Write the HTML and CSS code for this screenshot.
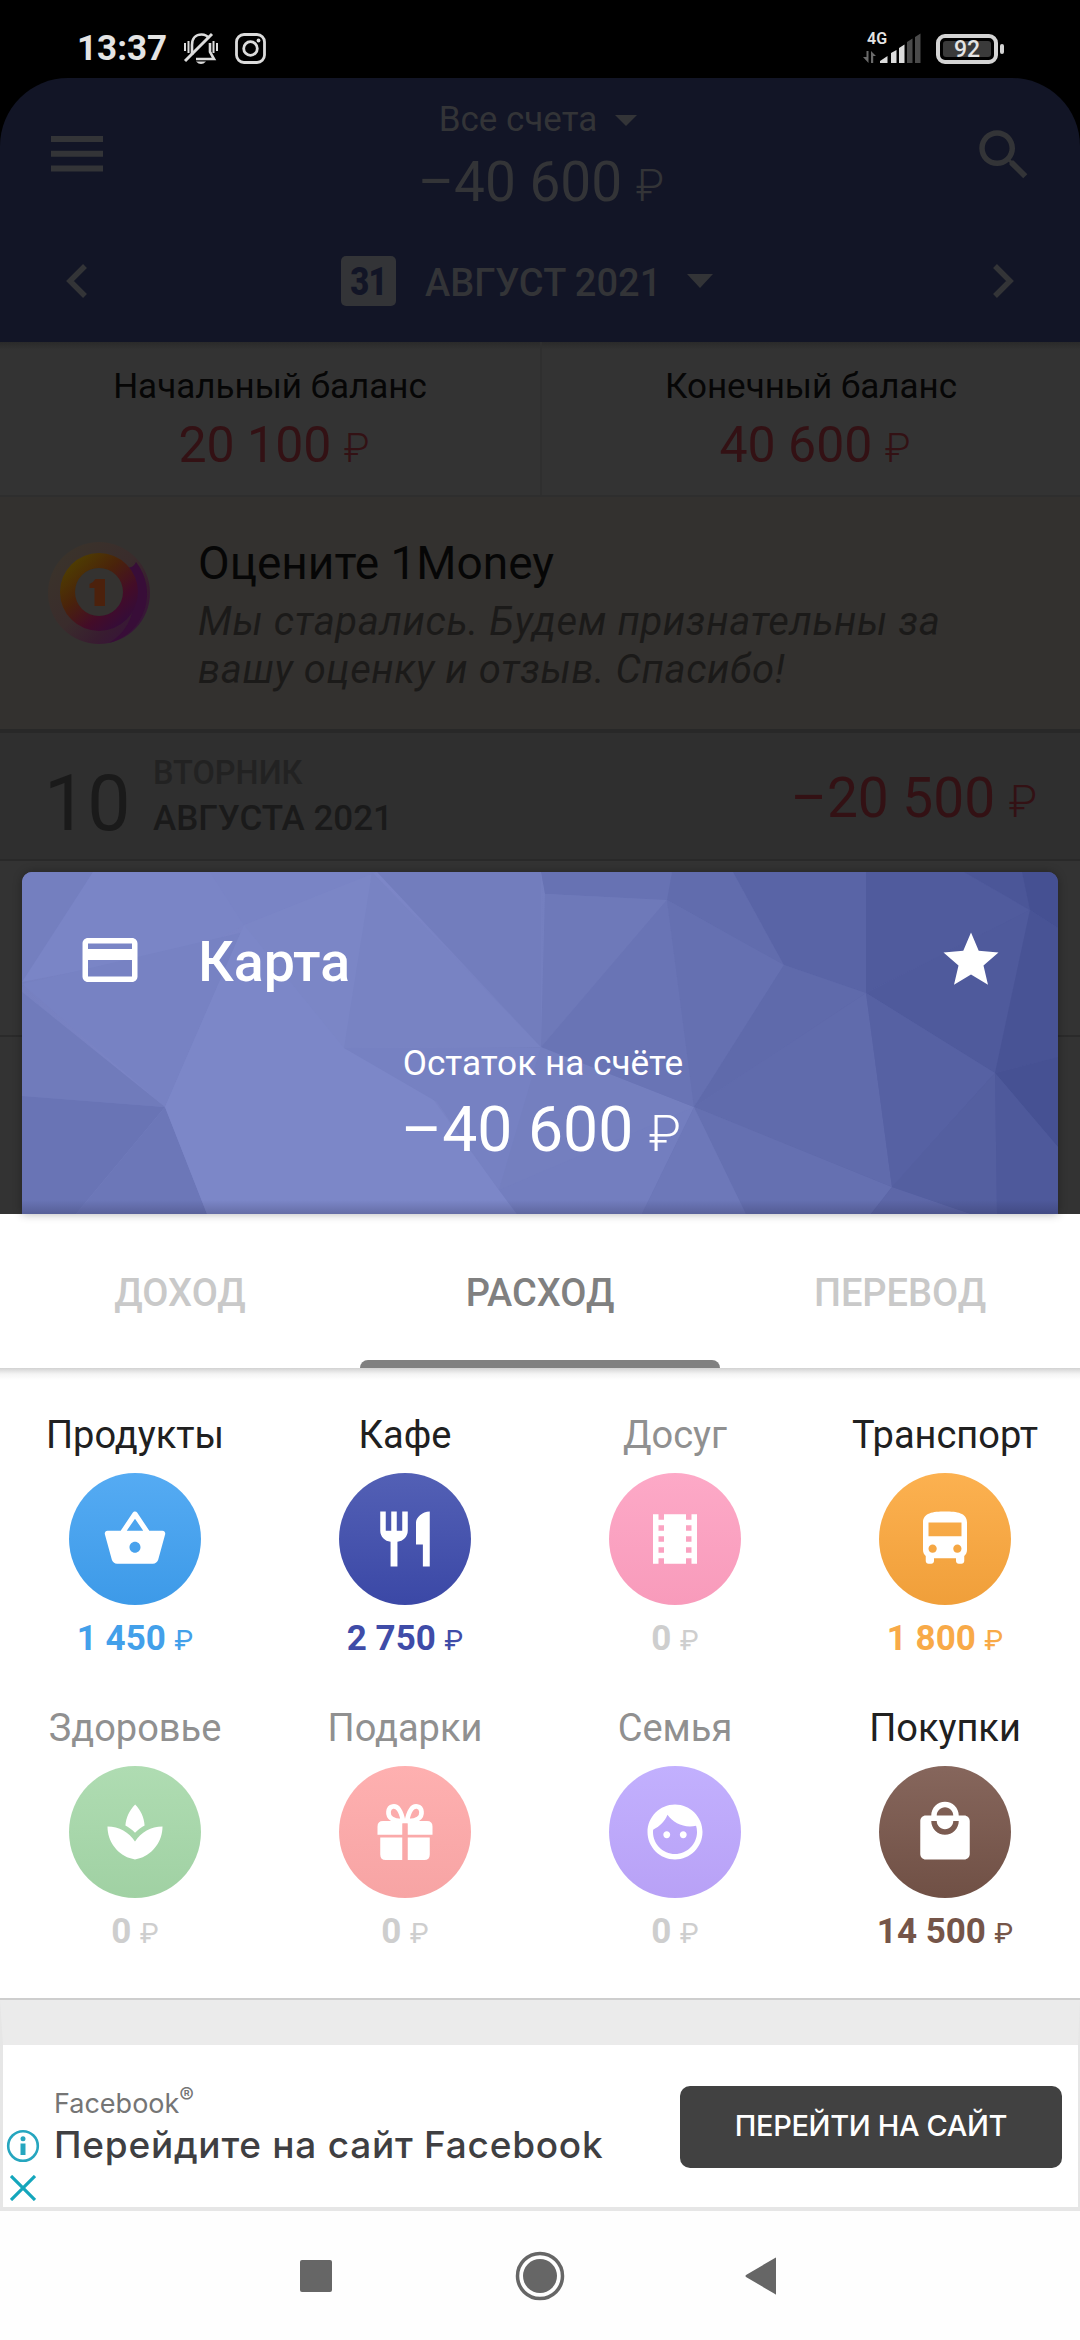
FILE: index.html
```html
<!DOCTYPE html>
<html lang="ru">
<head>
<meta charset="utf-8">
<title>1Money</title>
<link rel="stylesheet" href="styles.css">
</head>
<body>
<div class="screen">
  <header class="status">
    <span class="clock">13:37</span>
    <svg class="st-bell" width="36" height="34" viewBox="0 0 36 34" fill="none" stroke="#dcdcdc" stroke-width="2.6">
      <path d="M9 23V13C9 6 13 2.5 18.500 2.500C22 2.500 24.500 4 26 6.500M27 11V20L31 27H13"/>
      <path d="M2 29L29 2" stroke-width="3"/><path d="M2 11V19M5.500 9V21M30.500 9V21M34 11V19" stroke-width="2"/>
      <path d="M13 29.500H23Q18 34.500 13 29.500Z" fill="#dcdcdc" stroke="none"/>
    </svg>
    <svg class="st-insta" width="31" height="31" viewBox="0 0 31 31" fill="none" stroke="#dcdcdc" stroke-width="2.8">
      <rect x="1.500" y="1.500" width="28" height="28" rx="7.500"/><circle cx="15.500" cy="15.500" r="6.800"/><circle cx="23.500" cy="7.500" r="1.900" fill="#dcdcdc" stroke="none"/>
    </svg>
    <div class="net">
      <span class="gen">4G</span>
      <svg width="58" height="32" viewBox="0 0 58 32">
        <g fill="#6a6a6a"><path d="M3.500 20H5.500V32L0 26H3.500ZM8 20L13 25H10.200V32H8Z"/></g>
        <g fill="#dcdcdc"><path d="M17 32V30L24.500 25V32ZM28 32V22L33.500 19V32ZM36 32V17L41.500 13.500V32Z"/></g>
        <g fill="#4a4a4a"><path d="M44 32V11L49.500 7.500V32ZM52 32V6L57.500 2.500V32Z"/></g>
      </svg>
    </div>
    <div class="battery"><span class="level">92</span></div><i class="nub"></i>
  </header>

  <section class="top">
    <div class="bar">
      <svg class="menu" width="52" height="36" viewBox="0 0 52 36"><path fill="currentColor" d="M0 0h52v6H0zM0 14.700h52v6H0zM0 29.400h52v6H0z"/></svg>
      <div class="total">
        <div class="accounts">Все счета<svg width="22" height="11" viewBox="0 0 22 11"><path fill="currentColor" d="M0 0h22L11 11z"/></svg></div>
        <div class="sum">–40 600 <span class="rub">₽</span></div>
      </div>
      <svg class="search" width="66" height="66" viewBox="0 0 24 24"><path fill="currentColor" d="M15.500 14h-.79l-.28-.27C15.410 12.590 16 11.110 16 9.500 16 5.910 13.090 3 9.500 3S3 5.910 3 9.500 5.910 16 9.500 16c1.610 0 3.090-.59 4.230-1.570l.27.28v.79l5 4.990L20.490 19l-4.990-5zm-6 0C7.010 14 5 11.990 5 9.500S7.010 5 9.500 5 14 7.010 14 9.500 11.990 14 9.500 14z"/></svg>
    </div>
    <div class="period">
      <svg class="prev" width="21" height="34" viewBox="0 0 21 34"><path fill="none" stroke="currentColor" stroke-width="5.500" d="M19 2L4 17L19 32"/></svg>
      <span class="cal"><span class="cal-day">31</span></span>
      <span class="month">АВГУСТ 2021</span>
      <svg class="drop" width="26" height="14" viewBox="0 0 26 14"><path fill="currentColor" d="M0 0h26L13 14z"/></svg>
      <svg class="next" width="21" height="34" viewBox="0 0 21 34"><path fill="none" stroke="currentColor" stroke-width="5.500" d="M2 2L17 17L2 32"/></svg>
    </div>
  </section>

  <section class="balances">
    <div class="bal"><span class="bal-name">Начальный баланс</span><span class="bal-sum">20 100 <span class="rub">₽</span></span></div>
    <div class="bal"><span class="bal-name">Конечный баланс</span><span class="bal-sum">40 600 <span class="rub">₽</span></span></div>
  </section>

  <section class="rate">
    <svg class="logo" width="104" height="104" viewBox="0 0 104 104">
      <defs>
        <linearGradient id="ring" x1="0.1" y1="0.1" x2="0.8" y2="0.9"><stop offset="0" stop-color="#4f4000"/><stop offset=".4" stop-color="#4a230a"/><stop offset=".75" stop-color="#430c28"/><stop offset="1" stop-color="#350c38"/></linearGradient>
        <linearGradient id="halo" x1="0" y1="0" x2="0.9" y2="0.9"><stop offset="0" stop-color="#3a352a"/><stop offset=".55" stop-color="#3a2c2c"/><stop offset=".8" stop-color="#381c30"/><stop offset="1" stop-color="#38123c"/></linearGradient>
      </defs>
      <circle cx="52" cy="52" r="51" fill="url(#halo)"/>
      <path d="M89 21A51 51 0 0 1 62 102C86 88 94 60 80 26Q86 28 89 21Z" fill="#380d38"/>
      <circle cx="52" cy="51" r="39" fill="url(#ring)"/>
      <circle cx="52" cy="51" r="24" fill="#343230"/>
      <path d="M48.500 38H58V65H47.500V47H42.500V43Q46 42 48.500 38Z" fill="#4c210c"/>
    </svg>
    <div class="rate-text">
      <div class="rate-title">Оцените 1Money</div>
      <div class="rate-desc">Мы старались. Будем признательны за<br>вашу оценку и отзыв. Спасибо!</div>
    </div>
  </section>

  <section class="day">
    <span class="day-num">10</span>
    <div class="day-text"><span class="weekday">ВТОРНИК</span><span class="day-month">АВГУСТА 2021</span></div>
    <span class="day-sum">–20 500 <span class="rub">₽</span></span>
  </section>

  <section class="backdrop">
    <div class="card">
      <svg class="facets" width="1036" height="342" viewBox="0 0 1036 342" preserveAspectRatio="none">
        <defs><linearGradient id="base" x1="0" x2="1"><stop offset="0" stop-color="#7680c0"/><stop offset=".1" stop-color="#7a84c5"/><stop offset=".35" stop-color="#7c86c7"/><stop offset=".5" stop-color="#747fbf"/><stop offset=".68" stop-color="#656fb0"/><stop offset=".85" stop-color="#5761a4"/><stop offset="1" stop-color="#4d5799"/></linearGradient>
        <linearGradient id="foot" x1="0" x2="0" y1="0" y2="1"><stop offset="0" stop-color="#202040" stop-opacity="0"/><stop offset="1" stop-color="#202040" stop-opacity=".25"/></linearGradient></defs>
        <rect width="1036" height="342" fill="url(#base)"/>
        <path d="M0 0H71L4 110L0 116Z" fill="#747fbf"/>
        <path d="M71 0H188L222 53L180 75L0 110Z" fill="#7a85c6"/>
        <path d="M0 112L222 60L143 235Z" fill="#7782c3"/>
        <path d="M188 0H355L222 53Z" fill="#7984c5"/>
        <path d="M0 120L143 235L0 224Z" fill="#707bbb"/>
        <path d="M0 224L143 235L54 342H0Z" fill="#6974b5"/>
        <path d="M143 235L185 342H54Z" fill="#6c77b8"/>
        <path d="M222 53L355 0L345 60L330 176L143 235Z" fill="#7b86c6"/>
        <path d="M350 0L519 175L322 176Z" fill="#7883c3"/>
        <path d="M355 0H519V175Z" fill="#727dbd"/>
        <path d="M143 235L222 53L322 176L400 212L477 318L495 342H185Z" fill="#7c87c8"/>
        <path d="M322 176H519L477 318L415 230Z" fill="#7681c2"/>
        <path d="M519 175L672 235L640 300L477 318Z" fill="#747fbf"/>
        <path d="M477 318L672 235L620 342H495Z" fill="#737ebf"/>
        <path d="M519 0H650L645 28L523 22Z" fill="#6772b3"/>
        <path d="M523 22L645 28L519 175Z" fill="#6e79b9"/>
        <path d="M645 28L672 235L519 175Z" fill="#6974b5"/>
        <path d="M650 0H711L762 93L645 28Z" fill="#616cad"/>
        <path d="M645 28L762 93L672 235Z" fill="#6570b1"/>
        <path d="M711 0H844V121L762 93Z" fill="#5964a6"/>
        <path d="M762 93L844 121L672 235Z" fill="#5f6aab"/>
        <path d="M844 121L870 315L672 235Z" fill="#606bac"/>
        <path d="M672 235L870 315L849 342H724Z" fill="#6570b1"/>
        <path d="M672 235L724 342H620Z" fill="#6d78b9"/>
        <path d="M870 315L949 342H849Z" fill="#5d67a8"/>
        <path d="M844 0H942L1008 38L844 121Z" fill="#505b9d"/>
        <path d="M844 121L1008 38L973 201Z" fill="#4f5a9c"/>
        <path d="M844 121L973 201L870 315Z" fill="#5661a3"/>
        <path d="M870 315L973 201L975 342H949Z" fill="#545fa0"/>
        <path d="M942 0H1000L1008 38Z" fill="#4b5698"/>
        <path d="M1000 0H1036V56L1008 38Z" fill="#455092"/>
        <path d="M1008 38L1036 56V185L973 201Z" fill="#485395"/>
        <path d="M973 201L1036 185V275Z" fill="#465193"/>
        <path d="M973 201L1036 275V342H975Z" fill="#4e599b"/>
        <rect y="328" width="1036" height="14" fill="url(#foot)"/>
      </svg>
      <div class="card-head">
        <svg width="66" height="66" viewBox="0 0 24 24"><path fill="currentColor" d="M20 4H4c-1.110 0-1.990.89-1.990 2L2 18c0 1.110.89 2 2 2h16c1.110 0 2-.89 2-2V6c0-1.110-.89-2-2-2zm0 14H4v-6h16v6zm0-10H4V6h16v2z"/></svg>
        <span class="card-name">Карта</span>
        <svg width="66" height="66" viewBox="0 0 24 24"><path fill="currentColor" d="M12 17.270L18.180 21l-1.640-7.030L22 9.240l-7.190-.61L12 2 9.190 8.630 2 9.240l5.460 4.730L5.820 21z"/></svg>
      </div>
      <div class="card-note">Остаток на счёте</div>
      <div class="card-sum">–40 600 <span class="rub">₽</span></div>
    </div>
  </section>

  <nav class="tabs"><span class="tab">ДОХОД</span><span class="tab active">РАСХОД</span><span class="tab">ПЕРЕВОД</span></nav>

  <main class="cats">
    <div class="cat groceries"><span class="name">Продукты</span><span class="disc"><svg viewBox="0 0 24 24"><path d="M17.210 9l-4.380-6.560c-.19-.28-.51-.42-.83-.42-.32 0-.64.14-.83.43L6.790 9H2c-.55 0-1 .45-1 1 0 .09.01.18.04.27l2.540 9.270c.23.84 1 1.460 1.920 1.460h13c.92 0 1.690-.62 1.930-1.460l2.540-9.270L23 10c0-.55-.45-1-1-1h-4.790zM9 9l3-4.400L15 9H9zm3 8c-1.100 0-2-.9-2-2s.9-2 2-2 2 .9 2 2-.9 2-2 2z"/></svg></span><span class="amount">1 450 <span class="rub">₽</span></span></div>
    <div class="cat cafe"><span class="name">Кафе</span><span class="disc"><svg viewBox="0 0 24 24"><path d="M11 9H9V2H7v7H5V2H3v7c0 2.120 1.660 3.840 3.750 3.970V22h2.500v-9.030C11.340 12.840 13 11.120 13 9V2h-2v7zm5-3v8h2.500v8H21V2c-2.760 0-5 2.240-5 4z"/></svg></span><span class="amount">2 750 <span class="rub">₽</span></span></div>
    <div class="cat leisure empty"><span class="name">Досуг</span><span class="disc"><svg viewBox="0 0 24 24"><path d="M18 3v2h-2V3H8v2H6V3H4v18h2v-2h2v2h8v-2h2v2h2V3h-2zM8 17H6v-2h2v2zm0-4H6v-2h2v2zm0-4H6V7h2v2zm10 8h-2v-2h2v2zm0-4h-2v-2h2v2zm0-4h-2V7h2v2z"/></svg></span><span class="amount">0 <span class="rub">₽</span></span></div>
    <div class="cat transport"><span class="name">Транспорт</span><span class="disc"><svg viewBox="0 0 24 24"><path d="M4 16c0 .88.39 1.670 1 2.220V20c0 .55.45 1 1 1h1c.55 0 1-.45 1-1v-1h8v1c0 .55.45 1 1 1h1c.55 0 1-.45 1-1v-1.780c.61-.55 1-1.340 1-2.220V6c0-3.500-3.580-4-8-4s-8 .5-8 4v10zm3.500 1c-.83 0-1.500-.67-1.500-1.500S6.670 14 7.500 14s1.500.67 1.500 1.500S8.330 17 7.500 17zm9 0c-.83 0-1.500-.67-1.500-1.500s.67-1.500 1.500-1.500 1.500.67 1.500 1.500-.67 1.500-1.500 1.500zm1.500-6H6V6h12v5z"/></svg></span><span class="amount">1 800 <span class="rub">₽</span></span></div>
    <div class="cat health empty"><span class="name">Здоровье</span><span class="disc"><svg viewBox="0 0 24 24"><path d="M15.490 9.630c-.18-2.790-1.310-5.510-3.430-7.630-2.140 2.140-3.320 4.860-3.550 7.630 1.280.68 2.460 1.560 3.490 2.630 1.030-1.060 2.210-1.940 3.490-2.630zM12 15.450C9.850 12.170 6.180 10 2 10c0 5.320 3.360 9.820 8.030 11.490.63.23 1.290.4 1.970.51.68-.12 1.330-.29 1.970-.51C18.640 19.820 22 15.320 22 10c-4.180 0-7.850 2.170-10 5.450z"/></svg></span><span class="amount">0 <span class="rub">₽</span></span></div>
    <div class="cat gifts empty"><span class="name">Подарки</span><span class="disc"><svg viewBox="0 0 24 24"><path d="M4 8H11V13H2V10Q2 8 4 8ZM13 8H20Q22 8 22 10V13H13ZM3 14H11V22.200H5Q3 22.200 3 20.200ZM13 14H21V20.200Q21 22.200 19 22.200H13Z"/><path class="bow" d="M11.300 8C7.500 8.200 5.800 6.600 6 4.600C6.200 2.400 8.600 2 9.800 3.800C10.800 5.300 11.300 8 11.300 8ZM12.700 8C16.500 8.200 18.200 6.600 18 4.600C17.800 2.400 15.400 2 14.200 3.800C13.200 5.300 12.700 8 12.700 8Z"/></svg></span><span class="amount">0 <span class="rub">₽</span></span></div>
    <div class="cat family empty"><span class="name">Семья</span><span class="disc"><svg viewBox="0 0 24 24"><path d="M9 11.750c-.69 0-1.250.56-1.250 1.250s.56 1.250 1.250 1.250 1.250-.56 1.250-1.250-.56-1.250-1.250-1.250zm6 0c-.69 0-1.250.56-1.250 1.250s.56 1.250 1.250 1.250 1.250-.56 1.250-1.250-.56-1.250-1.250-1.250zM12 2C6.480 2 2 6.480 2 12s4.480 10 10 10 10-4.480 10-10S17.520 2 12 2zm0 18c-4.410 0-8-3.590-8-8 0-.29.02-.58.05-.86 2.360-1.050 4.230-2.980 5.210-5.370C11.070 8.330 14.050 10 17.420 10c.78 0 1.530-.09 2.250-.26.21.71.33 1.470.33 2.260 0 4.410-3.590 8-8 8z"/></svg></span><span class="amount">0 <span class="rub">₽</span></span></div>
    <div class="cat shopping"><span class="name">Покупки</span><span class="disc"><svg viewBox="0 0 24 24"><path d="M19 6h-2c0-2.760-2.240-5-5-5S7 3.240 7 6H5c-1.100 0-1.990.9-1.990 2L3 20c0 1.100.9 2 2 2h14c1.100 0 2-.9 2-2V8c0-1.100-.9-2-2-2zm-7-3c1.660 0 3 1.340 3 3H9c0-1.660 1.340-3 3-3zm0 10c-2.760 0-5-2.240-5-5h2c0 1.660 1.340 3 3 3s3-1.340 3-3h2c0 2.760-2.240 5-5 5z"/></svg></span><span class="amount">14 500 <span class="rub">₽</span></span></div>
  </main>

  <aside class="ad">
    <div class="ad-marks">
      <svg width="34" height="34" viewBox="0 0 34 34"><circle cx="17" cy="17" r="14.800" fill="none" stroke="#26a6bf" stroke-width="2.600"/><circle cx="17" cy="9.800" r="2.500" fill="#26a6bf"/><path d="M14.500 14.500H19.500V26H14.500Z" fill="#26a6bf"/></svg>
      <svg width="26" height="26" viewBox="0 0 26 26"><path d="M1 1L25 25M25 1L1 25" stroke="#14a6bc" stroke-width="3.200"/></svg>
    </div>
    <div class="ad-text"><span class="ad-brand">Facebook<sup>®</sup></span><span class="ad-title">Перейдите на сайт Facebook</span></div>
    <span class="ad-button">ПЕРЕЙТИ НА САЙТ</span>
  </aside>

  <footer class="keys">
    <i class="recent"></i>
    <svg width="50" height="50" viewBox="0 0 50 50"><circle cx="25" cy="25" r="22.500" fill="none" stroke="#666" stroke-width="3.500"/><circle cx="25" cy="25" r="17" fill="#666"/></svg>
    <svg width="31" height="38" viewBox="0 0 31 38"><path fill="#666" d="M31 1V37Q31 38 30 37L1 20Q0 19 1 18L30 1Q31 0 31 1Z"/></svg>
  </footer>
</div>
</body>
</html>
```
FILE: styles.css
```css
* { box-sizing: border-box; }
body { margin: 0; background: #000; font-family: Roboto, sans-serif; }
svg { display: block; flex: none; }
.screen { width: 1080px; height: 2340px; display: flex; flex-direction: column; overflow: hidden; white-space: nowrap; }
.screen > * { flex: none; }
.rub { font-size: .8em; font-weight: 300; }

.status { height: 78px; display: flex; align-items: flex-start; color: #e4e4e4; }
.clock { margin: 29px 0 0 77px; width: 106px; font-size: 35px; line-height: 40px; font-weight: 700; }
.st-bell { margin-top: 32px; }
.st-insta { margin: 33px 0 0 16px; }
.net { margin: 31px 0 0 597px; width: 58px; height: 32px; display: grid; }
.net > * { grid-area: 1 / 1; }
.gen { padding-left: 4px; font-size: 16px; line-height: 15px; font-weight: 600; }
.battery { margin: 34px 0 0 15px; width: 62px; height: 30px; border: 4px solid #d4d4d4; border-radius: 9px; padding: 3px; display: flex; }
.level { flex: 1; background: #3a3a3a; border-radius: 3px; font-size: 23px; line-height: 18px; font-weight: 500; text-align: center; }
.nub { margin: 44px 0 0 2px; width: 4px; height: 10px; border-radius: 2px; background: #d4d4d4; }

.top { height: 264px; padding-top: 22px; background: #121526; color: #333437; border-radius: 68px 68px 0 0; }
.bar { height: 114px; display: flex; justify-content: space-between; }
.menu { margin: 36px 0 0 51px; width: 52px; }
.search { margin: 22px 43px 0 0; }
.total { margin-left: 8px; text-align: center; }
.accounts { display: flex; justify-content: center; align-items: center; gap: 18px; margin-right: 6px; font-size: 35px; line-height: 40px; }
.sum { margin-top: 10px; font-size: 55px; line-height: 64px; }
.period { height: 134px; display: flex; align-items: center; padding: 0 66px; }
.cal { margin-left: 254px; width: 55px; height: 50px; border-radius: 5px; background: #333437; color: #121526; font-size: 39px; font-weight: 900; line-height: 52px; text-align: center; letter-spacing: -1px; }
.cal-day { display: block; transform: scaleX(.84); }
.month { margin-left: 29px; width: 262px; padding-top: 3px; font-size: 38px; font-weight: 500; }
.next { margin-left: auto; }

.balances { height: 155px; display: grid; grid-template-columns: 1fr 1fr; background: linear-gradient(#2a2a2a, #333 8px); border-bottom: 2px solid #2e2e2e; }
.bal { display: flex; flex-direction: column; align-items: center; padding-top: 25px; color: #060606; }
.bal + .bal { border-left: 2px solid #2f2f2f; }
.bal-name { font-size: 35px; line-height: 40px; }
.bal-sum { margin: 8px 0 0 8px; font-size: 50px; line-height: 60px; color: #331114; }

.rate { height: 236px; display: flex; padding: 39px 0 0 47px; background: #33312f; border-bottom: 4px solid #282828; }
.logo { margin-top: 5px; }
.rate-text { margin-left: 47px; }
.rate-title { font-size: 46px; line-height: 54px; color: #060606; }
.rate-desc { margin-top: 8px; font-size: 40px; line-height: 48px; letter-spacing: .6px; font-style: italic; color: #1b1a19; }

.day { height: 128px; display: flex; padding: 0 43px 0 44px; background: #2f2f2f; color: #1a1a1a; border-bottom: 2px solid #292929; }
.day-num { margin-top: 32px; width: 109px; font-size: 77px; line-height: 78px; }
.day-text { display: flex; flex-direction: column; gap: 6px; padding-top: 20px; line-height: 40px; }
.weekday { font-size: 32.5px; font-weight: 500; color: #222; }
.day-month { font-size: 35px; font-weight: 500; }
.day-sum { margin: 33px 0 0 auto; font-size: 55px; line-height: 64px; color: #331114; }

.backdrop { height: 353px; padding: 11px 22px 0; background: linear-gradient(#333 174px, #2a2a2a 174px, #2a2a2a 176px, #333 176px); }
.card { position: relative; height: 342px; padding-top: 55px; border-radius: 10px 10px 0 0; overflow: hidden; color: #fff; text-align: center; box-shadow: 0 0 10px rgba(0,0,0,.3); }
.facets { position: absolute; inset: 0; }
.card-head, .card-note, .card-sum { position: relative; }
.card-head { display: flex; align-items: center; height: 66px; padding: 0 54px 0 55px; }
.card-name { margin: 0 auto 0 55px; font-size: 55.5px; line-height: 58px; font-weight: 500; padding-top: 6px; }
.card-note { margin: 49px 0 0 6px; font-size: 35.2px; line-height: 42px; }
.card-sum { margin: 10px 0 0 2px; font-size: 62.5px; line-height: 72px; }

.tabs { height: 154px; display: grid; grid-template-columns: repeat(3, 1fr); background: #fff; text-align: center; }
.tab { padding-top: 5px; font-size: 38px; line-height: 149px; font-weight: 500; color: #c9c9c9; }
.tab.active { color: #808080; }
.tab.active::after { content: ""; display: block; height: 8px; margin-top: -8px; border-radius: 8px 8px 0 0; background: #808080; }

.cats { height: 632px; padding-top: 44px; display: grid; grid-template-columns: repeat(4, 270px); grid-auto-rows: 293px; background: linear-gradient(#d2d2d2, #f4f4f4 6px, #fff 12px); border-bottom: 2px solid #cecece; }
.cat { display: flex; flex-direction: column; align-items: center; color: var(--ink); }
.name { font-size: 38px; line-height: 46px; color: #202020; }
.empty .name { color: #909090; }
.disc { width: 132px; height: 132px; margin: 15px 0 14px; border-radius: 50%; display: grid; place-items: center; background: linear-gradient(var(--hi), var(--lo)); }
.disc svg { width: 66px; height: 66px; fill: #fff; }
.bow { fill: none; stroke: #fff; stroke-width: 1.7; }
.amount { font-size: 35px; line-height: 40px; font-weight: 700; }
.amount .rub { font-weight: 400; }
.groceries { --hi: #55abf3; --lo: #3d9ae8; --ink: #43a0ea; }
.cafe { --hi: #5360b5; --lo: #3b48a6; --ink: #3f4ca8; }
.leisure { --hi: #fda9c7; --lo: #f89bbb; }
.transport { --hi: #fcb150; --lo: #f09f3a; --ink: #f8aa48; }
.health { --hi: #afdcb2; --lo: #a0d1a3; }
.gifts { --hi: #feb0b0; --lo: #f7a4a4; }
.family { --hi: #c2b0fe; --lo: #b8a1f6; }
.shopping { --hi: #86665c; --lo: #705045; --ink: #755549; }
.empty { --ink: #cecece; }

.ad { height: 211px; border: solid #e6e6e6; border-width: 0 2px 4px 3px; border-top: 45px solid #ebebeb; background: #fff; display: flex; font-family: Inter, "Noto Sans", sans-serif; }
.ad-marks { display: flex; flex-direction: column; align-items: center; gap: 12px; margin: 84px 0 0 3px; }
.ad-text { margin-left: 14px; display: flex; flex-direction: column; }
.ad-brand { margin-top: 40px; font-size: 27px; line-height: 38px; color: #757575; }
.ad-brand sup { font-size: 22px; line-height: 0; }
.ad-title { font-size: 37px; line-height: 44px; font-weight: 500; letter-spacing: .75px; color: #3f3f42; }
.ad-button { margin: 41px 16px 0 auto; width: 382px; height: 82px; border-radius: 10px; background: #414141; color: #fff; font-size: 29px; line-height: 80px; font-weight: 500; letter-spacing: -.35px; text-align: center; }

.keys { flex: 1; display: flex; align-items: center; background: #fefefe; }
.recent { width: 32px; height: 32px; margin: 0 183px 0 300px; border-radius: 2px; background: #666; }
.keys svg:last-child { margin-left: 180px; }
```
